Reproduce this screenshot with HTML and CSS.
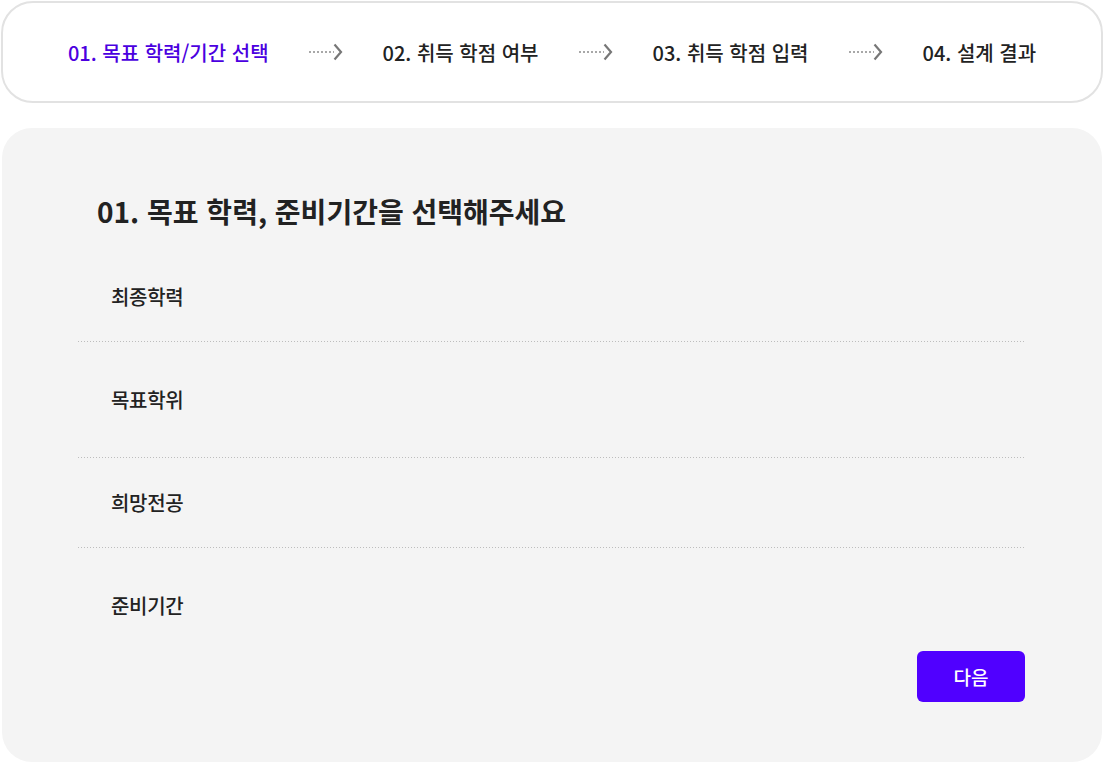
FILE: index.html
```html
<!DOCTYPE html>
<html lang="ko">
<head>
  <meta charset="UTF-8" />
  <meta name="viewport" content="width=device-width, initial-scale=1.0"/>
  <title>학습 설계</title>
  <link rel="stylesheet" href="styles.css">
</head>
<body>
  <nav class="steps">
    <div class="step active">01. 목표 학력/기간 선택</div>
    <svg class="step-arrow" width="34" height="18" viewBox="0 0 34 18">
      <line x1="0" y1="9" x2="25" y2="9" stroke="#8c8c8c" stroke-width="1.5" stroke-dasharray="2 2"/>
      <polyline points="25.5,1.5 32,9 25.5,16.5" fill="none" stroke="#777" stroke-width="2.2"/>
    </svg>
    <div class="step">02. 취득 학점 여부</div>
    <svg class="step-arrow" width="34" height="18" viewBox="0 0 34 18">
      <line x1="0" y1="9" x2="25" y2="9" stroke="#8c8c8c" stroke-width="1.5" stroke-dasharray="2 2"/>
      <polyline points="25.5,1.5 32,9 25.5,16.5" fill="none" stroke="#777" stroke-width="2.2"/>
    </svg>
    <div class="step">03. 취득 학점 입력</div>
    <svg class="step-arrow" width="34" height="18" viewBox="0 0 34 18">
      <line x1="0" y1="9" x2="25" y2="9" stroke="#8c8c8c" stroke-width="1.5" stroke-dasharray="2 2"/>
      <polyline points="25.5,1.5 32,9 25.5,16.5" fill="none" stroke="#777" stroke-width="2.2"/>
    </svg>
    <div class="step">04. 설계 결과</div>
  </nav>

  <section class="panel">
    <h2 class="panel-title">01. 목표 학력, 준비기간을 선택해주세요</h2>

    <div class="field field-first">
      <div class="field-label">최종학력</div>
    </div>
    <div class="field field-wide">
      <div class="field-label">목표학위</div>
    </div>
    <div class="field field-narrow">
      <div class="field-label">희망전공</div>
    </div>
    <div class="field field-last">
      <div class="field-label">준비기간</div>
    </div>

    <div class="actions">
      <button class="btn-next">다음</button>
    </div>
  </section>
</body>
</html>
```

FILE: styles.css
```css
body {
  margin: 0;
  padding: 1px 1px 0 1px;
  background: #ffffff;
  font-family: "Noto Sans CJK KR", "Noto Sans", sans-serif;
  color: #222;
  overflow: hidden;
}

.steps {
  height: 98px;
  border: 2px solid #e2e2e2;
  border-radius: 32px;
  display: flex;
  align-items: center;
  justify-content: center;
  gap: 40px;
}

.step {
  font-size: 20px;
  font-weight: 500;
  color: #222;
}

.step.active {
  color: #4b00e0;
}

.step-arrow {
  display: block;
}

.panel {
  margin: 25px 1px 0 1px;
  height: 634px;
  box-sizing: border-box;
  background: #f4f4f4;
  border-radius: 30px;
  padding: 0 77px 0 76px;
}

.panel-title {
  margin: 0;
  padding: 65px 0 0 19px;
  font-size: 28px;
  line-height: 36px;
  font-weight: 700;
  color: #222;
}

.field {
  padding: 0 33px;
  background: linear-gradient(to right, #bdbdbd 1px, transparent 1px) left bottom / 3px 1px repeat-x;
}

.field-first {
  padding-top: 56px;
  padding-bottom: 33px;
}

.field-wide {
  padding-top: 46px;
  padding-bottom: 46px;
}

.field-narrow {
  padding-top: 33px;
  padding-bottom: 33px;
}

.field-last {
  padding-top: 46px;
  padding-bottom: 0;
  background: none;
}

.field-label {
  font-size: 20px;
  line-height: 24px;
  font-weight: 500;
  color: #222;
  letter-spacing: -0.3px;
}

.actions {
  display: flex;
  justify-content: flex-end;
  margin-top: 33px;
}

.btn-next {
  width: 108px;
  height: 51px;
  border: none;
  border-radius: 6px;
  background: #5000ff;
  color: #fff;
  font-family: inherit;
  font-size: 19px;
  font-weight: 500;
  cursor: pointer;
}
```
